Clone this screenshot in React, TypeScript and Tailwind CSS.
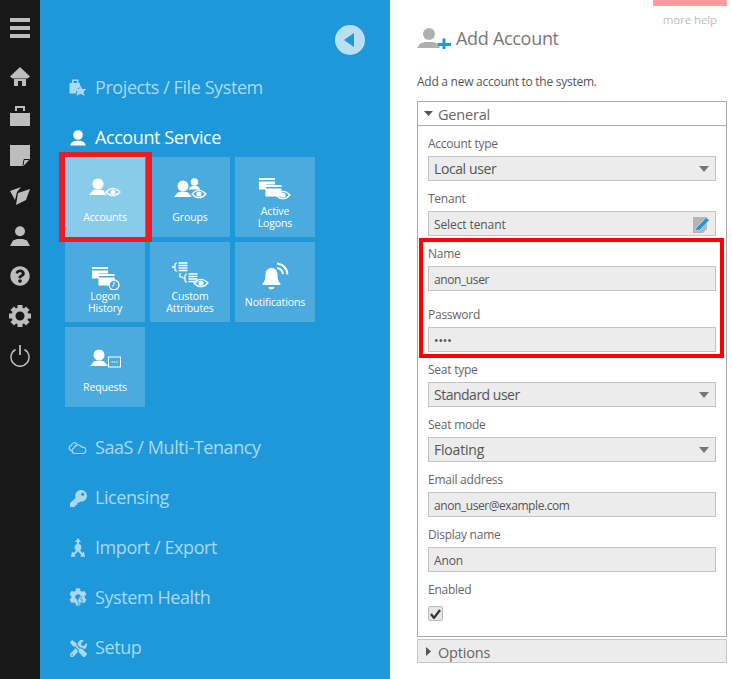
import React from "react";
import { FaKey, FaQuestionCircle, FaTools, FaCog } from "react-icons/fa";

const font = "font-['Open_Sans','Noto_Sans',sans-serif]";

// shared bits for the tile drawings, coordinates are tile pixels
const Person = ({ x, y, r = 5.5 }: { x: number; y: number; r?: number }) => (
    <g fill="#fff">
        <circle cx={x} cy={y} r={r} />
        <path d={`M${x - r * 1.6} ${y + r * 2} L${x - r * 0.9} ${y + r * 1.15} L${x - r * 0.3} ${y + r * 1.05} L${x + r * 0.3} ${y + r * 1.05} L${x + r * 0.9} ${y + r * 1.15} L${x + r * 1.6} ${y + r * 2} Z`} />
    </g>
);

const Eye = ({ x, y }: { x: number; y: number }) => (
    <g>
        <path d={`M${x - 7} ${y} Q${x} ${y - 7.5} ${x + 7} ${y} Q${x} ${y + 7.5} ${x - 7} ${y} Z`} fill="none" stroke="#fff" strokeWidth="1.2" />
        <circle cx={x} cy={y} r="2.6" fill="#fff" />
    </g>
);

const Cards = ({ x, y }: { x: number; y: number }) => (
    <g fill="#fff">
        <rect x={x} y={y} width="16" height="2" />
        <path d={`M${x} ${y + 3.5}h16v3h-9v5h-7z`} />
        <rect x={x + 6.5} y={y + 7} width="16" height="2" />
        <rect x={x + 6.5} y={y + 10.5} width="16" height="8" />
    </g>
);

const TreeList = ({ x, y }: { x: number; y: number }) => (
    <g stroke="#fff" fill="none" strokeWidth="1.2">
        <path d={`M${x} ${y - 4}q-2 0-2 2v1.5l-1.5.5 1.5.5v1.5q0 2 2 2`} />
        <path d={`M${x + 1.5} ${y - 4}h9M${x + 1.5} ${y - 1.5}h9M${x + 1.5} ${y + 1}h9M${x + 1.5} ${y + 3.5}h9`} strokeWidth="1.4" />
    </g>
);

const tiles = [
    {
        label: ["Accounts"],
        active: true,
        icon: (
            <>
                <Person x={33} y={27} />
                <Eye x={48} y={35} />
            </>
        ),
    },
    {
        label: ["Groups"],
        icon: (
            <>
                <Person x={44.5} y={25} r={3.8} />
                <Person x={33} y={29} />
                <Eye x={49} y={37} />
            </>
        ),
    },
    {
        label: ["Active", "Logons"],
        icon: (
            <>
                <Cards x={24} y={21} />
                <Eye x={48} y={38} />
            </>
        ),
    },
    {
        label: ["Logon", "History"],
        icon: (
            <>
                <Cards x={27} y={25} />
                <circle cx={49} cy={43} r="5" fill="#4babdf" stroke="#fff" strokeWidth="1.3" />
                <path d="M49 40v3l-2 1.5" stroke="#fff" fill="none" />
            </>
        ),
    },
    {
        label: ["Custom", "Attributes"],
        icon: (
            <>
                <path d="M22 25h2" stroke="#fff" strokeWidth="1.5" />
                <TreeList x={27} y={25} />
                <path d="M30 31v4h3" stroke="#fff" fill="none" strokeWidth="1.2" />
                <TreeList x={37} y={36} />
                <Eye x={51} y={41} />
            </>
        ),
    },
    {
        label: ["Notifications"],
        icon: (
            <>
                <path d="M36.5 26c-4 0-6 3-6 7 0 5-1.5 7-3 9v1h18v-1c-1.500-2-3-4-3-9 0-4-2-7-6-7z" fill="#fff" />
                <path d="M33.500 45h6q-.5 2.500-3 2.500t-3-2.500z" fill="#fff" />
                <path d="M42 26q5 .5 6 6M42 21.500q9.500 1 10.500 11" stroke="#fff" strokeWidth="2" fill="none" />
            </>
        ),
    },
    {
        label: ["Requests"],
        icon: (
            <>
                <Person x={34} y={28} />
                <rect x={43.5} y={30} width="12" height="10" fill="none" stroke="#fff" />
                <path d="M46.500 35h6" stroke="#fff" strokeDasharray="1.500 .8" />
            </>
        ),
    },
];

const NavIcon = ({ children }: { children: React.ReactNode }) => (
    <svg viewBox="0 0 20 20" className="h-5 w-5 text-[#a8d8f2]" fill="currentColor">
        {children}
    </svg>
);

const NavRow = ({ icon, label, active }: { icon: React.ReactNode; label: string; active?: boolean }) => (
    <div className={`flex h-[50px] items-center gap-[7px] pl-[28px] text-[18px] tracking-[-0.42px] ${active ? "text-white" : "text-[#a8d8f2]"}`}>
        <span className="flex w-5 justify-center">{icon}</span>
        <span className="mb-[2px]">{label}</span>
    </div>
);

const Field = ({ label, children, className = "" }: { label: string; children: React.ReactNode; className?: string }) => (
    <div className={className}>
        <div className="mb-1 h-4 text-[12px] leading-4 tracking-[-0.25px] text-[#666]">{label}</div>
        {children}
    </div>
);

const Input = ({ value, tracking = "tracking-[-0.1px]", children }: { value: string; tracking?: string; children?: React.ReactNode }) => (
    <div className={`flex h-[25px] items-center justify-between border border-[#c4c4c4] bg-[#ececec] pl-[5px] pr-[5px] text-[12px] text-[#555] ${tracking}`}>
        <span className="mt-[2px]">{value}</span>
        {children}
    </div>
);

const Select = ({ value, tracking = "tracking-[-0.2px]" }: { value: string; tracking?: string }) => (
    <div className={`flex h-[25px] items-center justify-between border border-[#c4c4c4] bg-[#ececec] pl-[5px] pr-[5px] text-[14px] text-[#555] ${tracking}`}>
        <span>{value}</span>
        <svg width="10" height="6" viewBox="0 0 10 6" className="mr-[1px]">
            <path d="M0 0h10L5 6z" fill="#777" />
        </svg>
    </div>
);

const RailGear = () => (
    <svg width="22" height="22" viewBox="0 0 22 22" fill="currentColor">
        <circle cx="11" cy="11" r="6.500" fill="none" stroke="currentColor" strokeWidth="4" />
        {[0, 45, 90, 135, 180, 225, 270, 315].map((a) => (
            <rect key={a} x="8.500" y="0" width="5" height="5" transform={`rotate(${a} 11 11)`} />
        ))}
    </svg>
);

export default function App() {
    return (
        <div className={`relative flex h-[679px] w-[732px] overflow-hidden bg-white ${font}`}>
            {/* dark rail */}
            <div className="flex w-10 shrink-0 flex-col items-center bg-[#181818] pt-2 text-[#bdbdbd]">
                <div className="mb-2 flex h-10 items-center justify-center">
                    <svg width="20" height="20" viewBox="0 0 20 20" fill="currentColor">
                        <path d="M0 0h20v4H0zM0 8h20v4H0zM0 16h20v4H0z" />
                    </svg>
                </div>
                <div className="flex h-10 items-center justify-center">
                    <svg width="20" height="19" viewBox="0 0 20 19" fill="currentColor">
                        <path d="M10 0 20 9.500 17.500 11.500H2.500L0 9.500zM4 12h12v7h-4v-5H8v5H4z" />
                    </svg>
                </div>
                <div className="flex h-10 items-center justify-center">
                    <svg width="20" height="20" viewBox="0 0 20 20" fill="currentColor">
                        <path d="M0 7h20v13H0zM5 0h10v5h-2V2H7v3H5z" />
                    </svg>
                </div>
                <div className="flex h-10 items-center justify-center">
                    <svg width="20" height="22" viewBox="0 0 20 22" fill="currentColor">
                        <path d="M0 0h20v14l-6.500 7H0z" />
                        <path d="M20 14.500h-6l-1 6" fill="none" stroke="#181818" strokeWidth="1" />
                    </svg>
                </div>
                <div className="flex h-10 items-center justify-center">
                    <svg width="20" height="20" viewBox="0 0 20 20" fill="currentColor">
                        <path d="M0 5 11 1 7 6 5 14zM8 7 20 3 16 14 6 19z" />
                    </svg>
                </div>
                <div className="flex h-10 items-center justify-center">
                    <svg width="20" height="20" viewBox="0 0 20 20" fill="currentColor">
                        <circle cx="10" cy="5.200" r="5" />
                        <path d="M0 20 3 14.500 7 13h6l4 1.500 3 5.500z" />
                    </svg>
                </div>
                <div className="flex h-10 items-center justify-center">
                    <FaQuestionCircle size={20} />
                </div>
                <div className="flex h-10 items-center justify-center">
                    <RailGear />
                </div>
                <div className="flex h-10 items-center justify-center">
                    <svg width="20" height="22" viewBox="0 0 20 22" fill="none" stroke="currentColor">
                        <path d="M10 0v10" strokeWidth="1.800" />
                        <path d="M5.500 4.500a9 9 0 1 0 9 0" strokeWidth="1.500" />
                    </svg>
                </div>
            </div>

            {/* blue nav */}
            <div className="w-[350px] shrink-0 bg-[#1e98d8]">
                <div className="flex h-[63px] justify-end pr-[25px] pt-[25px]">
                    <div className="flex h-[30px] w-[30px] items-center justify-center rounded-full bg-[#b8dff4]">
                        <svg width="10" height="14" viewBox="0 0 10 14" className="mr-[3px]">
                            <path d="M10 0v14L0 7z" fill="#1e98d8" />
                        </svg>
                    </div>
                </div>
                <NavRow
                    label="Projects / File System"
                    icon={
                        <NavIcon>
                            <path d="M1.500 5H4V1.500h6.500V5H12v4l-4 3 .5 3.500h-7zM5.500 3v2h3.500V3z" fillRule="evenodd" />
                            <path d="m12.500 7.500 1.700 3.500h4.300l-3 2.800 1.200 4.200-4.200-2.300-4 2.300 1-4.200-3-2.800H11z" />
                        </NavIcon>
                    }
                />
                <div className="h-[44px]">
                    <div className="flex h-[50px] items-center gap-[7px] pl-[28px] text-[18px] tracking-[-0.42px] text-white">
                        <span className="flex w-5 justify-center">
                            <svg viewBox="0 0 18 16" className="h-4 w-[18px]" fill="#fff">
                                <circle cx="9" cy="5" r="4.800" />
                                <path d="M1 15.500 3 12l3.500-1.200h5L15 12l2 3.500z" />
                            </svg>
                        </span>
                        <span className="mb-[2px]">Account Service</span>
                    </div>
                </div>
                <div className="ml-[25px] grid w-[250px] grid-cols-[80px_80px_80px] gap-[5px]">
                    {tiles.map((t) => (
                        <div key={t.label.join(" ")} className={`h-20 w-20 ${t.active ? "bg-[#8bcbea]" : "bg-[#4babdf]"}`}>
                            <svg width="80" height="48" viewBox="0 0 80 48" className="block">
                                {t.icon}
                            </svg>
                            <div className="flex h-6 flex-col items-center justify-center text-[10.500px] leading-3 tracking-[-0.12px] text-white">
                                {t.label.map((l) => (
                                    <span key={l}>{l}</span>
                                ))}
                            </div>
                        </div>
                    ))}
                </div>
                <div className="mt-4">
                    <NavRow
                        label="SaaS / Multi-Tenancy"
                        icon={
                            <NavIcon>
                                <path d="M4 12.500a2.500 2.500 0 0 1-.5-5A3 3 0 0 1 9 6" fill="none" stroke="currentColor" strokeWidth="1.200" />
                                <path d="M6.500 15.500a2.800 2.800 0 0 1-.3-5.500 4 4 0 0 1 7.500-.8 3.200 3.200 0 0 1 1.800 6.300z" fill="none" stroke="currentColor" strokeWidth="1.200" />
                            </NavIcon>
                        }
                    />
                    <NavRow label="Licensing" icon={<FaKey size={17} />} />
                    <NavRow
                        label="Import / Export"
                        icon={
                            <NavIcon>
                                <circle cx="10" cy="9.500" r="3.400" />
                                <path d="m10 0 3 4h-2v3H9V4H7zM9 11.500l-3.500 3.500-1.500-1.500-1 5.500 5-.5-1.500-1.500 4-4zM11 11.500l3.500 3.500 1.500-1.500 1 5.500-5-.5 1.500-1.500-4-4z" />
                            </NavIcon>
                        }
                    />
                    <NavRow
                        label="System Health"
                        icon={
                            <span className="relative block h-5 w-5">
                                <FaCog size={18} className="absolute left-[1px] top-0" />
                                <svg viewBox="0 0 10 12" className="absolute left-[7px] top-[8px] h-3 w-[10px]">
                                    <path d="M5 0 2 6h2l-2 6 6-8H5.500L7 0z" fill="#a8d8f2" stroke="#1e98d8" strokeWidth=".6" />
                                </svg>
                            </span>
                        }
                    />
                    <NavRow label="Setup" icon={<FaTools size={17} />} />
                </div>
            </div>

            {/* form side */}
            <div className="min-w-0 flex-1 pl-[27px] pr-[5px]">
                <div className="flex justify-end">
                    <div className="h-[6px] w-[74px] bg-[#ff9c9c]" />
                </div>
                <div className="mt-[7px] h-[13px] pr-[10px] text-right text-[11.500px] leading-[13px] tracking-[-0.1px] text-[#bbb]">more help</div>
                <div className="flex h-6 items-center gap-[5px] text-[18px] tracking-[-0.3px] text-[#777]">
                    <svg width="34" height="21" viewBox="0 0 34 21">
                        <circle cx="12" cy="6" r="6" fill="#b0b0b0" />
                        <path d="M0 20 3 15.500 8 14h8l5 1.500 2 4.500z" fill="#b0b0b0" />
                        <path d="M21 15h4.500v-4.500h3V15H34v3h-5.500v3h-3v-3H21z" fill="#1e98d8" />
                    </svg>
                    <span>Add Account</span>
                </div>
                <div className="mt-6 h-4 text-[12px] leading-4 tracking-[-0.26px] text-[#555]">Add a new account to the system.</div>
                <div className="mt-[11px] border border-[#aaa]">
                    <div className="flex h-6 items-center gap-[5px] border-b border-[#aaa] pl-[6px] text-[14.500px] tracking-[-0.2px] text-[#666]">
                        <svg width="9" height="5" viewBox="0 0 9 5">
                            <path d="M0 0h9L4.500 5z" fill="#555" />
                        </svg>
                        <span className="mt-[2px]">General</span>
                    </div>
                    <div className="h-[510px] pl-[10px] pr-[10px] pt-[10px]">
                        <Field label="Account type">
                            <Select value="Local user" tracking="tracking-[-0.4px]" />
                        </Field>
                        <Field label="Tenant" className="mt-[10px]">
                            <Input value="Select tenant">
                                <svg width="17" height="17" viewBox="0 0 17 17" className="mt-[1px]">
                                    <path d="M0 1h14v12l-4 4H0z" fill="#b5b5b5" />
                                    <path d="M3 12 13 1.500l3.500 2.500L7 14l-4.500 1z" fill="#1e98d8" stroke="#ececec" strokeWidth=".6" />
                                </svg>
                            </Input>
                        </Field>
                        <Field label="Name" className="mt-[10px]">
                            <Input value="anon_user" tracking="tracking-[-0.4px]" />
                        </Field>
                        <Field label="Password" className="mt-4">
                            <Input value="••••" />
                        </Field>
                        <Field label="Seat type" className="mt-[10px]">
                            <Select value="Standard user" tracking="tracking-[-0.5px]" />
                        </Field>
                        <Field label="Seat mode" className="mt-[10px]">
                            <Select value="Floating" />
                        </Field>
                        <Field label="Email address" className="mt-[10px]">
                            <Input value="anon_user@example.com" tracking="tracking-[-0.43px]" />
                        </Field>
                        <Field label="Display name" className="mt-[10px]">
                            <Input value="Anon" />
                        </Field>
                        <Field label="Enabled" className="mt-[10px]">
                            <div className="mt-2 flex h-[15px] w-[15px] items-center justify-center rounded-[2px] border border-[#bbb] bg-[#e6e6e6]">
                                <svg width="11" height="10" viewBox="0 0 11 10">
                                    <path d="m1 5 3 4 6-8" fill="none" stroke="#333" strokeWidth="2.200" />
                                </svg>
                            </div>
                        </Field>
                    </div>
                </div>
                <div className="mt-[2px] flex h-6 items-center gap-[7px] border border-[#c8c8c8] bg-[#ececec] pl-[8px] text-[14.500px] tracking-[-0.2px] text-[#666]">
                    <svg width="5" height="9" viewBox="0 0 5 9">
                        <path d="M0 0v9l5-4.500z" fill="#555" />
                    </svg>
                    <span className="mt-1">Options</span>
                </div>
            </div>

            {/* red highlight boxes */}
            <div className="pointer-events-none absolute left-[59px] top-[152px] h-[90px] w-[93px] border-[5px] border-x-[6px] border-[#ed1c24]" />
            <div className="pointer-events-none absolute left-[419px] top-[238px] h-[120px] w-[305px] border-4 border-[#ff0000]" />
        </div>
    );
}
